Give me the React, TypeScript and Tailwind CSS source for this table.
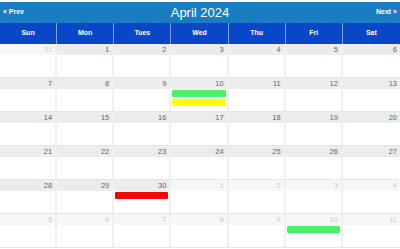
import React from 'react';

type Ev = { color: string };
type Day = { n: number; other?: boolean; events?: Ev[] };

const dayNames = ['Sun', 'Mon', 'Tues', 'Wed', 'Thu', 'Fri', 'Sat'];

// semanas de abril 2024, con los días de marzo y mayo alrededor
const weeks: Day[][] = [
  [{ n: 31, other: true }, { n: 1 }, { n: 2 }, { n: 3 }, { n: 4 }, { n: 5 }, { n: 6 }],
  [
    { n: 7 },
    { n: 8 },
    { n: 9 },
    { n: 10, events: [{ color: 'bg-[#4cf06a]' }, { color: 'bg-[#ffff00]' }] },
    { n: 11 },
    { n: 12 },
    { n: 13 },
  ],
  [{ n: 14 }, { n: 15 }, { n: 16 }, { n: 17 }, { n: 18 }, { n: 19 }, { n: 20 }],
  [{ n: 21 }, { n: 22 }, { n: 23 }, { n: 24 }, { n: 25 }, { n: 26 }, { n: 27 }],
  [
    { n: 28 },
    { n: 29 },
    { n: 30, events: [{ color: 'bg-[#ff0000]' }] },
    { n: 1, other: true },
    { n: 2, other: true },
    { n: 3, other: true },
    { n: 4, other: true },
  ],
  [
    { n: 5, other: true },
    { n: 6, other: true },
    { n: 7, other: true },
    { n: 8, other: true },
    { n: 9, other: true },
    { n: 10, other: true, events: [{ color: 'bg-[#4cf06a]' }] },
    { n: 11, other: true },
  ],
];

const App = () => {
  return (
    <div
      className="w-[400px] h-[249px] bg-white pt-[2px] overflow-hidden"
      style={{ fontFamily: '"Liberation Sans", Arial, sans-serif' }}
    >
      {/* Cabecera */}
      <div className="h-[21px] bg-[#1a7dc2] grid grid-cols-3 items-center px-[3px] text-white">
        <button className="justify-self-start text-[7px] font-bold">« Prev</button>
        <div className="justify-self-center text-[13px] leading-none">April 2024</div>
        <button className="justify-self-end text-[7px] font-bold">Next »</button>
      </div>

      {/* Días */}
      <div className="grid grid-cols-7 h-[21px] bg-[#0a47c8]">
        {dayNames.map((d, i) => (
          <div
            key={d}
            className={`flex items-center justify-center text-white text-[7px] font-bold ${
              i < 6 ? 'border-r border-[#7f9ee0]' : ''
            }`}
          >
            {d}
          </div>
        ))}
      </div>

      {/* Semanas */}
      {weeks.map((week, w) => (
        <div key={w} className="grid grid-cols-7 h-[34px] border-b border-[#e6e6e6]">
          {week.map((day, i) => (
            <div
              key={i}
              className={`flex flex-col ${i < 6 ? 'border-r-2 border-[#f0f0f0]' : ''}`}
            >
              <div
                className={`h-[11px] text-[7.5px] leading-[11px] text-right pr-[3px] ${
                  day.other ? 'bg-[#f7f7f7] text-[#cccccc]' : 'bg-[#ececec] text-[#666666]'
                }`}
              >
                {day.n}
              </div>
              <div className="flex flex-col gap-[2px] pt-[1px] px-[1px]">
                {day.events?.map((ev, k) => (
                  <div key={k} className={`h-[7px] rounded-[1px] ${ev.color}`} />
                ))}
              </div>
            </div>
          ))}
        </div>
      ))}
    </div>
  );
};

export default App;
